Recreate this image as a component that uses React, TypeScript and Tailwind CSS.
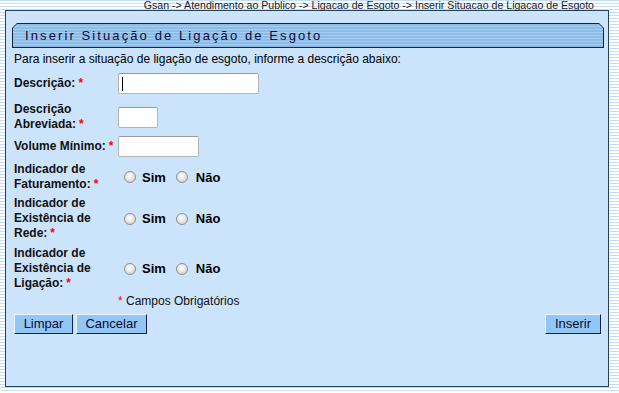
import React from 'react';

function Req() {
  return <span className="ml-[3px] text-[#ff0000]">*</span>;
}

function Radio() {
  return (
    <span className="inline-block w-[12px] h-[12px] rounded-full border border-[#8f8f8f] bg-[radial-gradient(circle_at_45%_40%,#ffffff_0%,#e2e2e2_55%,#bdbdbd_100%)]" />
  );
}

function RadioPair() {
  return (
    <div className="flex items-center text-[13px] font-bold text-black leading-[15px]">
      <span className="ml-[6px] flex"><Radio /></span>
      <span className="ml-[6px]">Sim</span>
      <span className="ml-[10px] flex"><Radio /></span>
      <span className="ml-[8px]">Não</span>
    </div>
  );
}

function Box({ w, caret }: { w: string; caret?: boolean }) {
  return (
    <div className={`relative h-[21px] ${w} rounded-[2px] border border-[#b4b4b4] border-t-[#9a9a9a] bg-white`}>
      {caret && <span className="absolute left-[3px] top-[3px] w-[1px] h-[14px] bg-black" />}
    </div>
  );
}

function Label({ lines }: { lines: string[] }) {
  return (
    <div className="w-[104px] text-[12px] font-bold leading-[15px] text-[#111]">
      {lines.map((l, i) => (
        <div key={i}>
          {l}
          {i === lines.length - 1 && <Req />}
        </div>
      ))}
    </div>
  );
}

export default function App() {
  const rows = [
    { lines: ['Descrição:'], field: <Box w="w-[141px]" caret />, h: 'h-[25px]', mt: 'mt-0' },
    { lines: ['Descrição', 'Abreviada:'], field: <Box w="w-[40px]" />, h: 'h-[30px]', mt: 'mt-[6px]' },
    { lines: ['Volume Mínimo:'], field: <Box w="w-[81px]" />, h: 'h-[21px]', mt: 'mt-[4px]' },
    { lines: ['Indicador de', 'Faturamento:'], field: <RadioPair />, h: 'h-[30px]', mt: 'mt-[5px]' },
    { lines: ['Indicador de', 'Existência de', 'Rede:'], field: <RadioPair />, h: 'h-[45px]', mt: 'mt-[4px]' },
    { lines: ['Indicador de', 'Existência de', 'Ligação:'], field: <RadioPair />, h: 'h-[45px]', mt: 'mt-[5px]' },
  ];

  const btn =
    "h-[20px] bg-[#92c6f7] border border-t-[#eaf5ff] border-l-[#eaf5ff] border-r-[#13214f] border-b-[#13214f] text-[13px] leading-[18px] text-[#0a0a2a] text-center";

  return (
    <div className="w-[619px] h-[393px] overflow-hidden bg-[repeating-linear-gradient(to_bottom,#c3dff5_0px,#c3dff5_1px,#ffffff_1px,#ffffff_3px)] font-['Liberation_Sans',Arial,sans-serif]">
      {/* Breadcrumb */}
      <div className="relative z-10 h-[10px] pr-[25px] text-right text-[10.6px] leading-[10px] text-[#1a1a1a]">
        {'Gsan -> Atendimento ao Publico -> Ligacao de Esgoto -> Inserir Situacao de Ligacao de Esgoto'}
      </div>

      {/* Panel */}
      <div className="ml-[5px] w-[604px] h-[377px] border border-[#24405c] bg-[#cbe4fb] pl-[6px] pt-[12px]">
        {/* Title bar */}
        <div className="w-[592px] h-[25px] bg-[#16233d] p-[1px] [clip-path:polygon(5px_0,calc(100%-5px)_0,100%_5px,100%_100%,0_100%,0_5px)]">
          <div className="h-full flex items-center pl-[12px] bg-[repeating-linear-gradient(to_bottom,#8dbbe8_0px,#8dbbe8_2px,#a7cdf1_2px,#a7cdf1_3px)] [clip-path:polygon(4px_0,calc(100%-4px)_0,100%_4px,100%_100%,0_100%,0_4px)]">
            <span className="text-[13px] tracking-[2.1px] text-[#0b0b3a] leading-[15px]">
              Inserir Situação de Ligação de Esgoto
            </span>
          </div>
        </div>

        <div className="pl-[2px]">
          <p className="mt-[4px] text-[12px] leading-[15px] text-black">
            Para inserir a situação de ligação de esgoto, informe a descrição abaixo:
          </p>

          {/* Form rows */}
          <div className="mt-[4px] flex flex-col">
            {rows.map((r, i) => (
              <div key={i} className={`flex items-center ${r.h} ${r.mt}`}>
                <Label lines={r.lines} />
                {r.field}
              </div>
            ))}
          </div>

          <div className="mt-[3px] h-[15px] pl-[104px] text-[12px] leading-[15px] text-[#111]">
            <span className="text-[#ff0000]">*</span> Campos Obrigatórios
          </div>

          {/* Buttons */}
          <div className="mt-[5px] flex items-center pr-[7px]">
            <button className={`${btn} w-[59px]`}>Limpar</button>
            <button className={`${btn} w-[71px] ml-[3px]`}>Cancelar</button>
            <button className={`${btn} w-[56px] ml-auto`}>Inserir</button>
          </div>
        </div>
      </div>
    </div>
  );
}
